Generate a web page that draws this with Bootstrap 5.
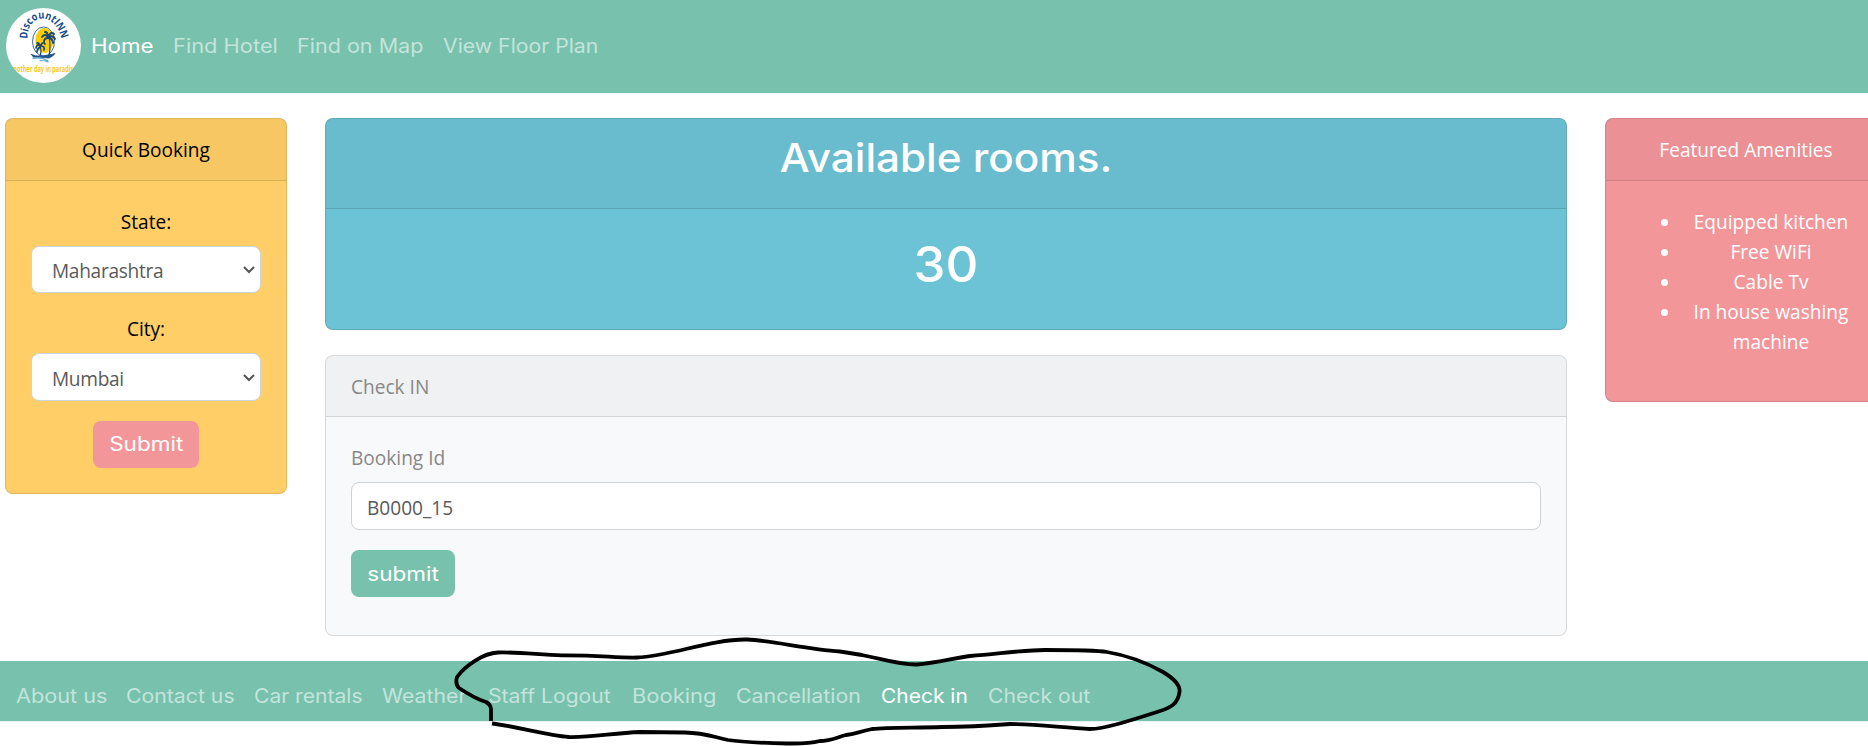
<!DOCTYPE html>
<html lang="en">
<head>
<meta charset="utf-8">
<meta name="viewport" content="width=device-width, initial-scale=1">
<title>DiscountINN - Check in</title>
<link href="https://cdn.jsdelivr.net/npm/bootstrap@5.3.0/dist/css/bootstrap.min.css" rel="stylesheet">
<style>
  body { font: 400 19.1px/30px "Open Sans", "Noto Sans", sans-serif; color: #888; background: #fff; overflow: hidden; height: 746px; }
  .bar { background: #78c2ad; font-family: Inter, sans-serif; font-size: 19.6px; }
  .topbar { height: 93px; padding: 0 0 2px 6px; }
  .footbar { height: 60px; padding: 8px 0 0 15.5px; margin-top: 25px; box-shadow: 0 1px 0 #e4f3ef; }
  .bar .nav-link { display: inline-block; color: rgba(255,255,255,.57); padding: 0; white-space: nowrap; line-height: 30px; transform: scaleX(var(--sx)); transform-origin: 0 50%; }
  .bar .nav-link.active { color: #fff; }
  .bar .nav-item { width: var(--w); flex: none; }
  .logo { width: 75px; height: 75px; margin-right: 9.5px; flex: none; }
  .layout { gap: 38px; padding: 25px 0 0 5px; }
  .side { width: 282px; flex: none; }
  .main { width: 1242px; flex: none; gap: 25px; }
  .panel { border: 1px solid rgba(0,0,0,.125); border-radius: 8px; }
  .panel > .card-header { padding: 16px 25px 15px; background: rgba(0,0,0,.03); border-bottom: 1px solid rgba(0,0,0,.125); border-radius: 7px 7px 0 0; }
  .panel > .card-body { padding: 26px 25px 25px; }
  .panel-warning { background: #ffce67; color: #000; }
  .panel-info { background: #6cc3d5; color: #fff; }
  .panel-info > .card-header { padding: 15px 25px 16px; }
  .panel-info > .card-body { padding-top: 25px; }
  .panel-pink { background: #f3969a; color: #fff; }
  .panel-light { background: #f8f9fa; }
  .panel-light > .card-header { padding-bottom: 14px; }
  .panel-info h2, .panel-info h1 { font-family: Inter, sans-serif; font-weight: 450; margin-bottom: 10px; }
  .panel-info h2 { font-size: 39.3px; line-height: 48px; transform: scaleX(1.074); }
  .panel-info h1 { font-size: 49.5px; line-height: 60px; transform: scaleX(1.03); }
  .field { height: 47px; border: 1px solid #ced4da; border-radius: 8px; color: #5a5a5a; font-size: 19.1px; line-height: 30px; padding: 9px 15px 6px; }
  input.field { height: 48px; }
  select.field { padding-left: 20px; letter-spacing: -.3px; background: #fff url("data:image/svg+xml,%3Csvg xmlns='http://www.w3.org/2000/svg' width='12' height='8'%3E%3Cpath d='M1 1l5 5 5-5' fill='none' stroke='%23555' stroke-width='2'/%3E%3C/svg%3E") no-repeat right 5px top 19px; }
  #city { height: 48px; background-position-y: 20px; }
  .push { height: 47px; border: 0; border-radius: 8px; color: #fff; font: 400 19.6px/30px Inter, sans-serif; padding: 9px 0 8px; text-align: center; }
  .push span { display: inline-block; transform: scaleX(1.15); }
  .push-pink, .push-pink:hover { background: #f3969a; width: 106px; padding: 8px 0 9px; }
  .push-green, .push-green:hover { background: #78c2ad; width: 104px; }
  .gap-label { margin-bottom: 9px; display: block; }
  .amenities { padding-left: 50px; margin-bottom: 19px; }
  .scribble { position: absolute; left: 0; top: 0; pointer-events: none; }
</style>
</head>
<body>
<nav class="bar topbar d-flex align-items-center">
  <svg class="logo" viewBox="0 0 75 75" role="img" aria-label="DiscountINN">
    <defs>
      <clipPath id="disc"><circle cx="37.5" cy="37.5" r="37.5"/></clipPath>
      <path id="arch" d="M21.500 31 C20.500 5 50 2 56 33"/>
    </defs>
    <circle cx="37.5" cy="37.5" r="37.5" fill="#fff"/>
    <g clip-path="url(#disc)">
      <text font-family="Open Sans, sans-serif" font-weight="700" font-size="10.8" fill="#164a8c"><textPath href="#arch" textLength="58" lengthAdjust="spacingAndGlyphs">DiscountINN</textPath></text>
      <ellipse cx="37.5" cy="33.500" rx="11" ry="14.5" fill="#fff" stroke="#356ca5" stroke-width="1"/>
      <ellipse cx="38.5" cy="32.500" rx="9.2" ry="12.5" fill="#fc0"/>
      <g fill="none" stroke="#164778" stroke-linecap="round">
        <path d="M43 29 Q45 38 43 48 M34 38 Q36 43 34 48" stroke-width="1.2"/>
        <path d="M42 29 q-3-4-6 0 M42 29 q0-5-3-5 M43 28 q2-5 5-2 M43 29 q4-2 6 2 M43 30 q4 1 4 5 M42 30 q-4 0-4 4" stroke-width="1.9"/>
        <path d="M34 38 q-3-3-4 2 M34 38 q-1-4-3-3 M35 37 q2-4 4-1 M35 38 q4 0 3 4 M34 39 q-3 2-3 5" stroke-width="1.7"/>
        <path d="M25 46.500 q9 4 24-1 q-2 3-6 4.500 q-9-1-16-1" stroke-width=".8" fill="#1c5a94"/>
        <path d="M27 50.500 q8-2 15 2.500 M34 52.500 q5 0 8 1.500" stroke="#58a6d4" stroke-width="1.1"/>
      </g>
      <text x="37" y="64" text-anchor="middle" textLength="67" lengthAdjust="spacingAndGlyphs" font-family="Open Sans, sans-serif" font-weight="700" font-size="9" fill="#fbc90f">Another day in paradise</text>
    </g>
  </svg>
  <ul class="nav flex-nowrap">
    <li class="nav-item" style="--w:82px;--sx:1.14"><a class="nav-link active" href="#">Home</a></li>
    <li class="nav-item" style="--w:124.5px;--sx:1.115"><a class="nav-link" href="#">Find Hotel</a></li>
    <li class="nav-item" style="--w:146px;--sx:1.1"><a class="nav-link" href="#">Find on Map</a></li>
    <li class="nav-item" style="--w:170px;--sx:1.083"><a class="nav-link" href="#">View Floor Plan</a></li>
  </ul>
</nav>

<div class="layout d-flex align-items-start">
  <aside class="card panel panel-warning side text-center">
    <div class="card-header">Quick Booking</div>
    <form class="card-body">
      <label class="gap-label" for="state">State:</label>
      <select id="state" class="form-select field mb-0"><option>Maharashtra</option></select>
      <label class="gap-label" for="city" style="margin-top:21px">City:</label>
      <select id="city" class="form-select field"><option>Mumbai</option></select>
      <button type="button" class="btn push push-pink" style="margin-top:20px"><span>Submit</span></button>
    </form>
  </aside>

  <main class="main d-flex flex-column">
    <section class="card panel panel-info text-center">
      <div class="card-header"><h2>Available rooms.</h2></div>
      <div class="card-body"><h1>30</h1></div>
    </section>
    <section class="card panel panel-light">
      <div class="card-header">Check IN</div>
      <form class="card-body">
        <label class="gap-label" for="booking">Booking Id</label>
        <input id="booking" class="form-control field" value="B0000_15">
        <button type="button" class="btn push push-green" style="margin:20px 0 13px"><span>submit</span></button>
      </form>
    </section>
  </main>

  <aside class="card panel panel-pink side text-center">
    <div class="card-header">Featured Amenities</div>
    <div class="card-body">
      <ul class="amenities">
        <li>Equipped kitchen</li><li>Free WiFi</li><li>Cable Tv</li><li>In house washing machine</li>
      </ul>
    </div>
  </aside>
</div>

<footer class="bar footbar">
  <ul class="nav flex-nowrap pt-2 mt-1">
    <li class="nav-item" style="--w:110.5px;--sx:1.107"><a class="nav-link" href="#">About us</a></li>
    <li class="nav-item" style="--w:128px;--sx:1.084"><a class="nav-link" href="#">Contact us</a></li>
    <li class="nav-item" style="--w:127.5px;--sx:1.076"><a class="nav-link" href="#">Car rentals</a></li>
    <li class="nav-item" style="--w:106.5px;--sx:1.087"><a class="nav-link" href="#">Weather</a></li>
    <li class="nav-item" style="--w:143.5px;--sx:1.076"><a class="nav-link" href="#">Staff Logout</a></li>
    <li class="nav-item" style="--w:104.5px;--sx:1.12"><a class="nav-link" href="#">Booking</a></li>
    <li class="nav-item" style="--w:145px;--sx:1.091"><a class="nav-link" href="#">Cancellation</a></li>
    <li class="nav-item" style="--w:107px;--sx:1.07"><a class="nav-link active" href="#">Check in</a></li>
    <li class="nav-item" style="--w:110px;--sx:1.08"><a class="nav-link" href="#">Check out</a></li>
  </ul>
</footer>

<!-- freehand loop around the staff links -->
<svg class="scribble" width="1868" height="746" fill="none" stroke="#000" stroke-width="3.8" stroke-linejoin="round">
  <path d="M491 721 V709 Q491 705 486 702 C476 699 465 692 459 688 Q455 684 457 677 C465 666 483 653 498 652.5 C523 652 540 655 562 655.3 C600 655 615 658 637 657.5 C672 656 710 639 747 639.5 C775 641 805 649 840 651.5 L862 655 C882 659 900 665 917 664.5 C935 663 955 658 970 656 C1005 653 1025 650 1045 650 C1070 650 1095 650 1107 652 C1125 655 1147 663 1163 672 C1178 681 1180 688 1179.500 692 C1178 704 1170 708 1160 711 C1135 719 1105 729 1090 729 C1065 728 1035 724 1010 724 C985 726 960 727 942 727 C918 728 888 727 872 729 C858 732 855 734 846 735 C838 737 830 741 820 741 C808 744 800 743.500 787 743.500 C765 743 740 742 728 740 C710 736 705 733 685 732.500 L640 732 C613 733 592 737.500 569 737 C545 735 520 727 492 723.500"/>
</svg>
<script src="https://cdn.jsdelivr.net/npm/bootstrap@5.3.0/dist/js/bootstrap.bundle.min.js"></script>
</body>
</html>
